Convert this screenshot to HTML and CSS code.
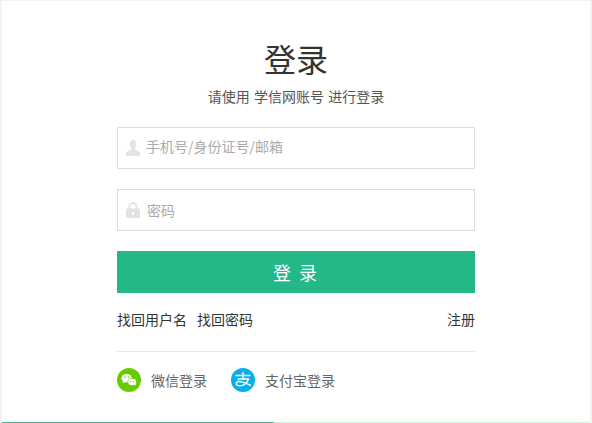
FILE: index.html
```html
<!DOCTYPE html>
<html lang="zh-CN">
<head>
    <meta charset="UTF-8">
    <title>登录</title>
    <link rel="stylesheet" href="styles.css">
</head>
<body>
    <div class="page">
        <div class="login">
            <h1 class="title">登录</h1>
            <p class="subtitle">请使用 学信网账号 进行登录</p>

            <div class="field">
                <svg class="field-icon" viewBox="0 0 14 16" width="14" height="16">
                    <path fill="#e3e3e3" d="M7 0c2.200 0 3.400 1.600 3.400 3.800 0 1.600-.6 3-1.500 4v1.400c0 .6 1.500 1 3 1.700 1.300.6 2.100 1.300 2.100 2.300V16H0v-2.800c0-1 .8-1.700 2.100-2.300 1.500-.7 3-1.100 3-1.700V7.800c-.9-1-1.500-2.400-1.500-4C3.600 1.600 4.800 0 7 0z"/>
                </svg>
                <span class="placeholder placeholder-raised">手机号/身份证号/邮箱</span>
            </div>
            <div class="field">
                <svg class="field-icon" viewBox="0 0 14 16" width="14" height="16">
                    <path fill="none" stroke="#e3e3e3" stroke-width="2" d="M3.500 7V4.500a3.500 3.500 0 0 1 7 0V7"/>
                    <path fill="#e3e3e3" fill-rule="evenodd" d="M1.500 6.500h11c.8 0 1.500.7 1.500 1.500v6.500c0 .8-.7 1.500-1.500 1.500h-11C.7 16 0 15.300 0 14.500V8c0-.8.7-1.500 1.500-1.500zM6 10v3h2v-3z"/>
                </svg>
                <span class="placeholder">密码</span>
            </div>

            <div class="submit">登 录</div>

            <div class="links">
                <a class="link" href="#">找回用户名</a>
                <a class="link" href="#">找回密码</a>
                <a class="link register" href="#">注册</a>
            </div>

            <div class="social">
                <a class="social-item" href="#">
                    <svg viewBox="0 0 24 24" width="24" height="24">
                        <circle cx="12" cy="12" r="12" fill="#66cc00"/>
                        <ellipse cx="9.700" cy="10.300" rx="5.200" ry="4.300" fill="#fff"/>
                        <path fill="#fff" d="M6.500 13l-.7 2.200 2.500-1.300z"/>
                        <ellipse cx="15.200" cy="14" rx="4.400" ry="3.600" fill="#fff" stroke="#66cc00" stroke-width=".8"/>
                        <path fill="#fff" d="M17.300 16.500l1.300 1.500-.2-2.200z"/>
                        <circle cx="8" cy="9" r=".8" fill="#66cc00"/>
                        <circle cx="11.500" cy="9" r=".8" fill="#66cc00"/>
                        <circle cx="13.700" cy="13.300" r=".6" fill="#66cc00"/>
                        <circle cx="16.700" cy="13.300" r=".6" fill="#66cc00"/>
                    </svg>
                    <span>微信登录</span>
                </a>
                <a class="social-item" href="#">
                    <svg viewBox="0 0 24 24" width="24" height="24">
                        <circle cx="12" cy="12" r="12" fill="#09aeec"/>
                        <path fill="none" stroke="#fff" stroke-width="1.400" d="M4.500 7.500h15M12 4v7M6.500 11h11c-1 3.400-4.300 6.800-8.500 6.800-2.400 0-3.800-.9-3.800-2.200 0-1.500 1.700-2.300 3.600-2.100 3.200.3 7 2 11.200 4"/>
                    </svg>
                    <span>支付宝登录</span>
                </a>
            </div>
        </div>
        <div class="progress"></div>
    </div>
</body>
</html>
```

FILE: styles.css
```css
html, body {
    height: 100%;
}

body {
    margin: 0;
    overflow: hidden;
    background-color: #eef5f3;
    font-family: "Noto Sans CJK SC", "Noto Sans", sans-serif;
    color: #333;
}

.page {
    box-sizing: border-box;
    display: flex;
    flex-direction: column;
    height: 422px;
    margin: 1px 2px 0;
    background-color: white;
}

.login {
    box-sizing: border-box;
    flex: 1;
    width: 358px;
    margin-left: 115px;
}

.title {
    margin: 37px 0 0;
    height: 40px;
    line-height: 40px;
    font-size: 32px;
    font-weight: normal;
    text-align: center;
    color: #333;
}

.subtitle {
    margin: 8px 0 0;
    height: 21px;
    line-height: 20px;
    font-size: 14px;
    word-spacing: 1px;
    text-align: center;
    color: #555;
}

.field {
    box-sizing: border-box;
    display: flex;
    align-items: center;
    height: 42px;
    margin-top: 20px;
    padding-left: 8px;
    border: 1px solid #ddd;
}

.field-icon {
    margin-right: 7px;
}

.placeholder {
    font-size: 14px;
    color: #aaa;
}

.placeholder-raised {
    margin: 0 0 4px -1px;
}

.submit {
    height: 42px;
    margin-top: 20px;
    line-height: 42px;
    font-size: 18px;
    text-align: center;
    letter-spacing: 2px;
    color: white;
    background-color: #24b888;
}

.links {
    display: flex;
    gap: 10px;
    margin-top: 16px;
    padding-bottom: 22px;
    border-bottom: 1px solid #e5e5e5;
    line-height: 20px;
    font-size: 14px;
}

.link {
    color: #333;
    text-decoration: none;
}

.register {
    margin-left: auto;
}

.social {
    display: flex;
    gap: 24px;
    margin-top: 16px;
}

.social-item {
    display: flex;
    align-items: center;
    gap: 10px;
    font-size: 14px;
    color: #666;
    text-decoration: none;
}

.progress {
    height: 1px;
    background: linear-gradient(to right, #4fb98c 272px, #d5efe2 272px);
}
```
